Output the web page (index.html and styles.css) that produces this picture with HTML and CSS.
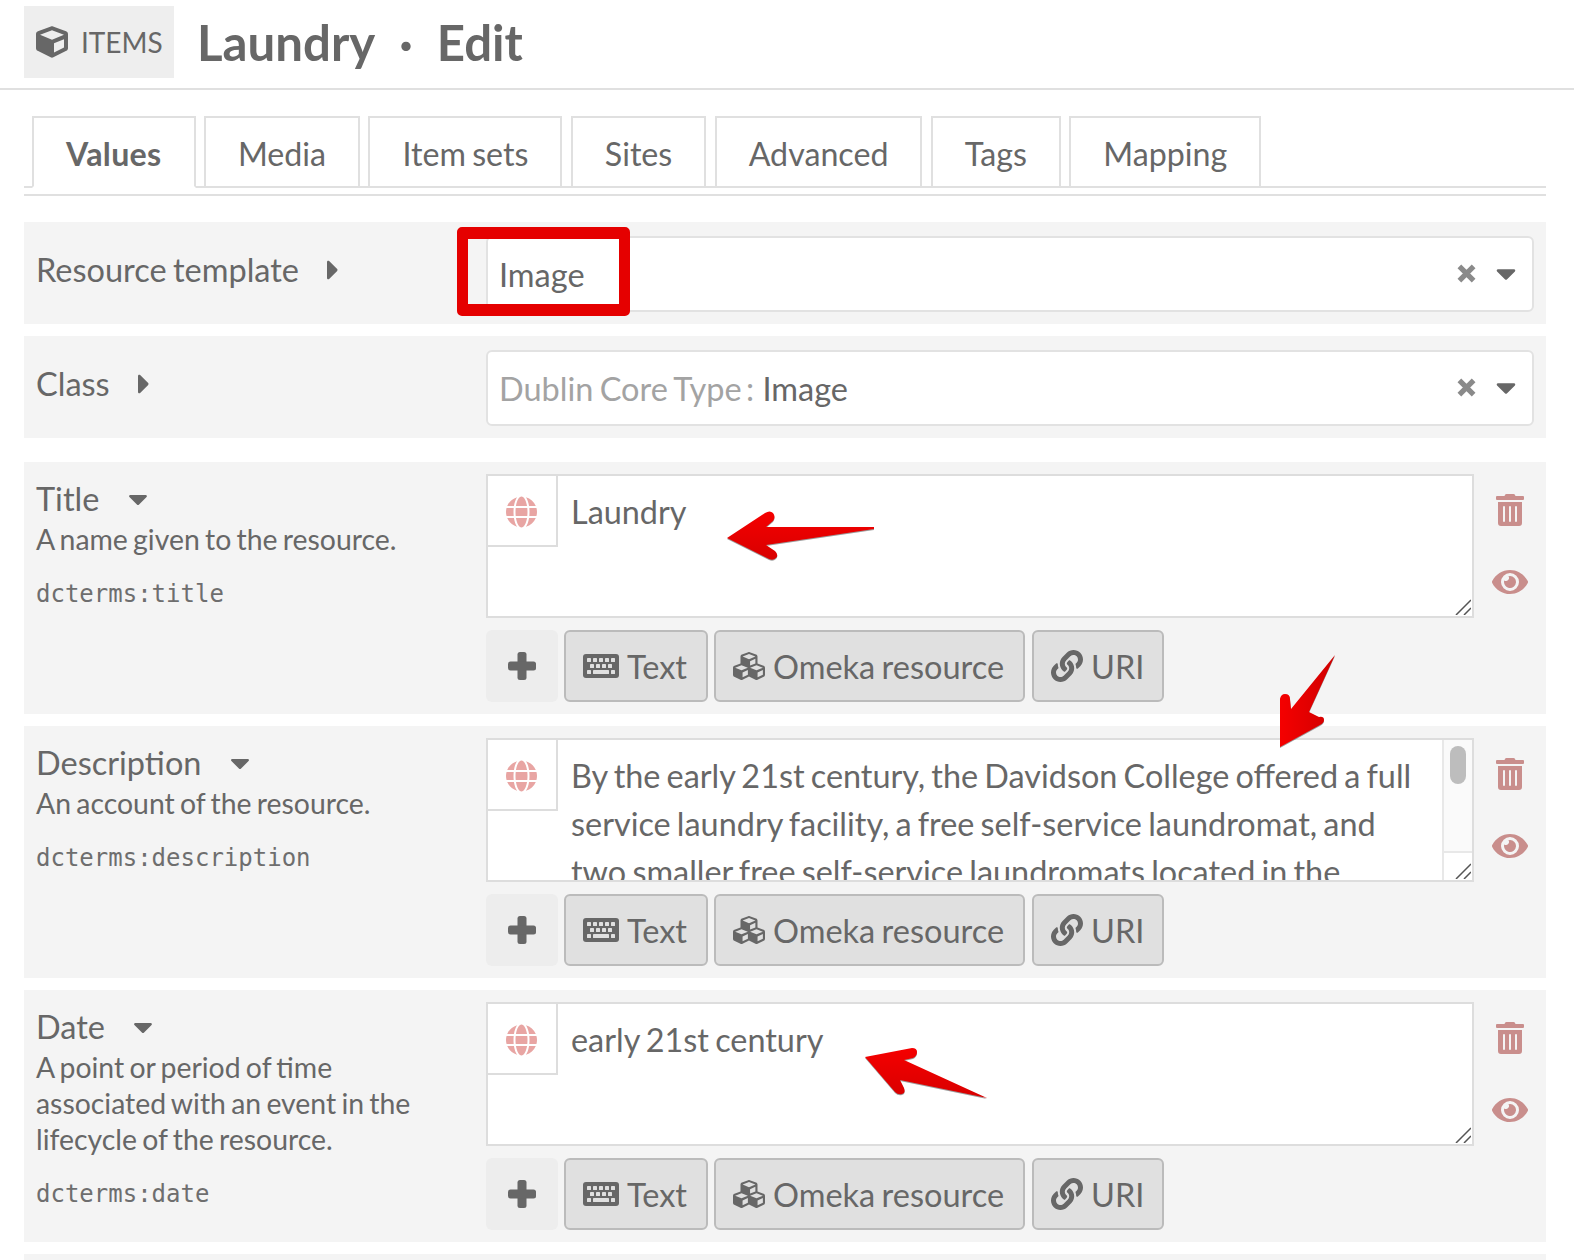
FILE: index.html
```html
<!DOCTYPE html>
<html lang="en">
<head>
<meta charset="UTF-8">
<title>Laundry · Edit</title>
<link rel="stylesheet" href="styles.css">
</head>
<body>

<svg class="icon-defs" xmlns="http://www.w3.org/2000/svg">
  <symbol id="i-cube" viewBox="0 0 512 512"><path d="M239.1 6.3l-208 78c-18.7 7-31.1 25-31.1 45v225.1c0 18.2 10.3 34.8 26.5 42.9l208 104c13.5 6.8 29.4 6.8 42.9 0l208-104c16.3-8.1 26.5-24.8 26.5-42.9V129.3c0-20-12.4-37.9-31.1-44.9l-208-78C262 2.2 250 2.2 239.1 6.3zM256 68.4l192 72v1.1l-192 78-192-78v-1.1l192-72zm32 356V275.5l160-65v133.9l-160 80z"/></symbol>
  <symbol id="i-globe" viewBox="0 0 496 512"><path d="M336.5 160C322 70.7 287.8 8 248 8s-74 62.7-88.5 152h177zM152 256c0 22.2 1.2 43.5 3.3 64h185.3c2.1-20.5 3.3-41.8 3.3-64s-1.2-43.5-3.3-64H155.3c-2.1 20.5-3.3 41.8-3.3 64zm324.7-96c-28.6-67.9-86.5-120.4-158-141.6 24.4 33.8 41.2 84.7 50 141.6h108zM177.2 18.4C105.8 39.6 47.8 92.1 19.3 160h108c8.7-56.9 25.5-107.8 49.9-141.6zM487.4 192H372.7c2.1 21 3.3 42.5 3.3 64s-1.2 43-3.3 64h114.6c5.5-20.5 8.6-41.8 8.6-64s-3.1-43.5-8.5-64zM120 256c0-21.5 1.2-43 3.3-64H8.6C3.2 212.5 0 233.8 0 256s3.2 43.5 8.6 64h114.6c-2-21-3.2-42.5-3.2-64zm39.5 96c14.5 89.3 48.7 152 88.5 152s74-62.7 88.5-152h-177zm159.3 141.6c71.4-21.2 129.4-73.7 158-141.6h-108c-8.8 56.9-25.6 107.8-50 141.6zM19.3 352c28.6 67.9 86.5 120.4 158 141.6-24.4-33.8-41.2-84.7-50-141.6h-108z"/></symbol>
  <symbol id="i-plus" viewBox="0 0 28 28"><rect x="9.5" y="0" width="9" height="28" rx="2.5"/><rect x="0" y="9.5" width="28" height="9" rx="2.5"/></symbol>
  <symbol id="i-keyboard" viewBox="0 0 576 512">
    <rect y="64" width="576" height="384" rx="48"/>
    <g fill="#e0e0e0">
      <rect x="64" y="128" width="64" height="64" rx="10"/><rect x="160" y="128" width="64" height="64" rx="10"/><rect x="256" y="128" width="64" height="64" rx="10"/><rect x="352" y="128" width="64" height="64" rx="10"/><rect x="448" y="128" width="64" height="64" rx="10"/>
      <rect x="112" y="224" width="64" height="64" rx="10"/><rect x="208" y="224" width="64" height="64" rx="10"/><rect x="304" y="224" width="64" height="64" rx="10"/><rect x="400" y="224" width="64" height="64" rx="10"/>
      <rect x="64" y="320" width="64" height="64" rx="10"/><rect x="160" y="320" width="256" height="64" rx="10"/><rect x="448" y="320" width="64" height="64" rx="10"/>
    </g>
  </symbol>
  <symbol id="i-cubes" viewBox="0 0 512 512"><path d="M488.6 250.2L392 214V105.5c0-15-9.3-28.4-23.4-33.7l-100-37.5c-8.1-3.1-17.1-3.1-25.3 0l-100 37.5c-14.1 5.3-23.4 18.7-23.4 33.7V214l-96.6 36.2C9.3 255.5 0 268.9 0 283.9V394c0 13.6 7.7 26.1 19.9 32.2l100 50c10.1 5.1 22.1 5.1 32.2 0l103.9-52 103.9 52c10.1 5.1 22.1 5.1 32.2 0l100-50c12.2-6.1 19.9-18.6 19.9-32.2V283.9c0-15-9.3-28.4-23.4-33.7zM358 214.8l-85 31.9v-68.2l85-37v73.3zM154 104.1l102-38.2 102 38.2v.6l-102 41.4-102-41.4v-.6zm84 291.1l-85 42.5v-79.1l85-38.8v75.4zm0-112l-102 41.4-102-41.4v-.6l102-38.2 102 38.2v.6zm240 112l-85 42.5v-79.1l85-38.8v75.4zm0-112l-102 41.4-102-41.4v-.6l102-38.2 102 38.2v.6z"/></symbol>
  <symbol id="i-link" viewBox="0 0 512 512"><path d="M326.612 185.391c59.747 59.809 58.927 155.698.36 214.59-.11.12-.24.25-.36.37l-67.2 67.2c-59.27 59.27-155.699 59.262-214.96 0-59.27-59.26-59.27-155.7 0-214.96l37.106-37.106c9.84-9.84 26.786-3.3 27.294 10.606.648 17.722 3.826 35.527 9.69 52.721 1.986 5.822.567 12.262-3.783 16.612l-13.087 13.087c-28.026 28.026-28.905 73.66-1.155 101.96 28.024 28.579 74.086 28.749 102.325.51l67.2-67.19c28.191-28.191 28.073-73.757 0-101.83-3.701-3.694-7.429-6.564-10.341-8.569a16.037 16.037 0 0 1-6.947-12.606c-.396-10.567 3.348-21.456 11.698-29.806l21.054-21.055c5.521-5.521 14.182-6.199 20.584-1.731a152.482 152.482 0 0 1 20.522 17.197zM467.547 44.449c-59.261-59.262-155.69-59.27-214.96 0l-67.2 67.2c-.12.12-.25.25-.36.37-58.566 58.892-59.387 154.781.36 214.59a152.454 152.454 0 0 0 20.521 17.196c6.402 4.468 15.064 3.789 20.584-1.731l21.054-21.055c8.35-8.35 12.094-19.239 11.698-29.806a16.037 16.037 0 0 0-6.947-12.606c-2.912-2.005-6.64-4.875-10.341-8.569-28.073-28.073-28.191-73.639 0-101.83l67.2-67.19c28.239-28.239 74.3-28.069 102.325.51 27.75 28.3 26.872 73.934-1.155 101.96l-13.087 13.087c-4.35 4.35-5.769 10.79-3.783 16.612 5.864 17.194 9.042 34.999 9.69 52.721.509 13.906 17.454 20.446 27.294 10.606l37.106-37.106c59.271-59.259 59.271-155.699.001-214.959z"/></symbol>
  <symbol id="i-trash" viewBox="0 0 448 512"><path d="M32 464a48 48 0 0 0 48 48h288a48 48 0 0 0 48-48V128H32zm272-256a16 16 0 0 1 32 0v224a16 16 0 0 1-32 0zm-96 0a16 16 0 0 1 32 0v224a16 16 0 0 1-32 0zm-96 0a16 16 0 0 1 32 0v224a16 16 0 0 1-32 0zM432 32H312l-9.4-18.7A24 24 0 0 0 281.1 0H166.8a23.72 23.72 0 0 0-21.4 13.3L136 32H16A16 16 0 0 0 0 48v32a16 16 0 0 0 16 16h416a16 16 0 0 0 16-16V48a16 16 0 0 0-16-16z"/></symbol>
  <symbol id="i-eye" viewBox="0 0 576 512"><path d="M572.52 241.4C518.29 135.59 410.93 64 288 64S57.68 135.64 3.48 241.41a32.35 32.35 0 0 0 0 29.19C57.71 376.41 165.07 448 288 448s230.32-71.64 284.52-177.41a32.35 32.35 0 0 0 0-29.19zM288 400a144 144 0 1 1 144-144 143.93 143.93 0 0 1-144 144zm0-240a95.31 95.31 0 0 0-25.31 3.79 47.85 47.85 0 0 1-66.9 66.9A95.78 95.78 0 1 0 288 160z"/></symbol>
  <symbol id="i-caret-down" viewBox="0 0 320 200"><path d="M31.3 0h257.3c17.8 0 26.7 21.5 14.1 34.1L174.1 162.8c-7.8 7.8-20.5 7.8-28.3 0L17.2 34.1C4.6 21.5 13.5 0 31.3 0z"/></symbol>
  <symbol id="i-caret-right" viewBox="0 0 192 320"><path d="M0 288.662V31.338c0-17.818 21.543-26.741 34.142-14.142l128.662 128.662c7.81 7.81 7.81 20.474 0 28.284L34.142 302.804C21.543 315.404 0 306.48 0 288.662z"/></symbol>
  <symbol id="i-close" viewBox="0 0 20 20"><path d="M2.5 2.5l15 15M17.5 2.5l-15 15" fill="none" stroke="currentColor" stroke-width="5.5"/></symbol>
  <symbol id="i-grip" viewBox="0 0 16 16"><path d="M1 16L16 1M9 16l7-7" fill="none" stroke="#555" stroke-width="1.5"/></symbol>
</svg>

<div class="page">

  <header class="page-head">
    <div class="crumb">
      <svg class="crumb-icon"><use href="#i-cube"/></svg>
      <span>ITEMS</span>
    </div>
    <h1>Laundry<span class="dot">·</span>Edit</h1>
  </header>

  <!-- Tabs -->
  <nav class="tabs">
    <a class="tab active">Values</a>
    <a class="tab">Media</a>
    <a class="tab">Item sets</a>
    <a class="tab">Sites</a>
    <a class="tab">Advanced</a>
    <a class="tab">Tags</a>
    <a class="tab">Mapping</a>
  </nav>
  <div class="tabs-rule"></div>

  <!-- Template and class -->
  <section class="row row-select">
    <div class="label-col">
      <div class="label">Resource template <svg class="caret-right"><use href="#i-caret-right"/></svg></div>
    </div>
    <div class="select">
      <span class="select-value">Image</span>
      <svg class="select-x"><use href="#i-close"/></svg>
      <svg class="select-caret"><use href="#i-caret-down"/></svg>
    </div>
  </section>

  <section class="row row-select row-class">
    <div class="label-col">
      <div class="label">Class <svg class="caret-right"><use href="#i-caret-right"/></svg></div>
    </div>
    <div class="select">
      <span class="select-value"><span class="muted">Dublin Core Type <span class="colon">:</span></span> Image</span>
      <svg class="select-x"><use href="#i-close"/></svg>
      <svg class="select-caret"><use href="#i-caret-down"/></svg>
    </div>
  </section>

  <!-- Title -->
  <section class="row row-value">
    <div class="label-col">
      <div class="label">Title <svg class="caret-down"><use href="#i-caret-down"/></svg></div>
      <p class="desc">A name given to the resource.</p>
      <p class="term">dcterms:title</p>
    </div>
    <div class="value-col">
      <div class="field">
        <div class="lang"><svg class="globe"><use href="#i-globe"/></svg></div>
        <div class="field-text">Laundry</div>
        <svg class="grip"><use href="#i-grip"/></svg>
      </div>
      <div class="actions">
        <button class="btn-add"><svg><use href="#i-plus"/></svg></button>
        <button class="btn btn-text"><svg class="ico-keyboard"><use href="#i-keyboard"/></svg>Text</button>
        <button class="btn btn-omeka"><svg><use href="#i-cubes"/></svg>Omeka resource</button>
        <button class="btn btn-uri"><svg><use href="#i-link"/></svg>URI</button>
      </div>
    </div>
    <div class="tools">
      <svg class="trash"><use href="#i-trash"/></svg>
      <svg class="eye"><use href="#i-eye"/></svg>
    </div>
  </section>

  <!-- Description -->
  <section class="row row-value">
    <div class="label-col">
      <div class="label">Description <svg class="caret-down"><use href="#i-caret-down"/></svg></div>
      <p class="desc">An account of the resource.</p>
      <p class="term">dcterms:description</p>
    </div>
    <div class="value-col">
      <div class="field">
        <div class="lang"><svg class="globe"><use href="#i-globe"/></svg></div>
        <div class="field-text">By the early 21st century, the Davidson College offered a full service laundry facility, a free self-service laundromat, and two smaller free self-service laundromats located in the</div>
        <div class="scrollbar">
          <div class="scroll-thumb"></div>
          <div class="scroll-corner"></div>
        </div>
        <svg class="grip"><use href="#i-grip"/></svg>
      </div>
      <div class="actions">
        <button class="btn-add"><svg><use href="#i-plus"/></svg></button>
        <button class="btn btn-text"><svg class="ico-keyboard"><use href="#i-keyboard"/></svg>Text</button>
        <button class="btn btn-omeka"><svg><use href="#i-cubes"/></svg>Omeka resource</button>
        <button class="btn btn-uri"><svg><use href="#i-link"/></svg>URI</button>
      </div>
    </div>
    <div class="tools">
      <svg class="trash"><use href="#i-trash"/></svg>
      <svg class="eye"><use href="#i-eye"/></svg>
    </div>
  </section>

  <!-- Date -->
  <section class="row row-value">
    <div class="label-col">
      <div class="label">Date <svg class="caret-down"><use href="#i-caret-down"/></svg></div>
      <p class="desc">A point or period of time associated with an event in the lifecycle of the resource.</p>
      <p class="term">dcterms:date</p>
    </div>
    <div class="value-col">
      <div class="field">
        <div class="lang"><svg class="globe"><use href="#i-globe"/></svg></div>
        <div class="field-text">early 21st century</div>
        <svg class="grip"><use href="#i-grip"/></svg>
      </div>
      <div class="actions">
        <button class="btn-add"><svg><use href="#i-plus"/></svg></button>
        <button class="btn btn-text"><svg class="ico-keyboard"><use href="#i-keyboard"/></svg>Text</button>
        <button class="btn btn-omeka"><svg><use href="#i-cubes"/></svg>Omeka resource</button>
        <button class="btn btn-uri"><svg><use href="#i-link"/></svg>URI</button>
      </div>
    </div>
    <div class="tools">
      <svg class="trash"><use href="#i-trash"/></svg>
      <svg class="eye"><use href="#i-eye"/></svg>
    </div>
  </section>

  <section class="row row-next"></section>

  <!-- Red annotations drawn over the screenshot -->
  <div class="callout"></div>
  <svg class="arrows" viewBox="0 0 1574 1260" xmlns="http://www.w3.org/2000/svg">
    <defs>
      <linearGradient id="red-h" x1="0" y1="0" x2="0" y2="1">
        <stop offset="0" stop-color="#f50000"/>
        <stop offset="1" stop-color="#d80000"/>
      </linearGradient>
      <linearGradient id="red-d" x1="0" y1="0" x2="1" y2="0">
        <stop offset="0" stop-color="#f50000"/>
        <stop offset="1" stop-color="#d00000"/>
      </linearGradient>
    </defs>
    <path fill="url(#red-h)" d="M727 538L765 513Q770 510 773 513Q776 517 773 521L766 527L874 527L874 529L766 545L775 551Q779 555 776 558Q773 561 769 559Z"/>
    <path fill="url(#red-d)" d="M1280 747L1280 699Q1281 694 1285 694Q1290 694 1290 699L1291 709L1335 655L1309 712L1319 717Q1324 716 1324 720Q1324 723 1320 725Z"/>
    <path fill="url(#red-h)" d="M865 1057L912 1048Q917 1048 917 1052Q917 1056 913 1058L904 1060L987 1098L900 1080L904 1088Q906 1093 902 1094Q898 1095 895 1092Z"/>
  </svg>

</div>

</body>
</html>
```

FILE: styles.css
```css
* {
  box-sizing: border-box;
}
html, body {
  margin: 0;
  height: 1260px;
  overflow: hidden;
  background-color: #fff;
}
body {
  font-family: Lato, "Open Sans", sans-serif;
  font-size: 32.5px;
  word-spacing: -2px;
  color: #676767;
}
svg {
  fill: currentColor;
}
.icon-defs {
  display: none;
}
.page {
  position: relative;
  width: 1574px;
  height: 1260px;
}

/* Header */
.page-head {
  display: flex;
  align-items: center;
  height: 90px;
  padding: 6px 0 10px 24px;
  border-bottom: 2px solid #e0e0e0;
}
.crumb {
  display: flex;
  align-items: center;
  gap: 13px;
  width: 150px;
  height: 72px;
  padding-left: 12px;
  background-color: #eee;
  font-size: 28px;
}
.crumb-icon {
  width: 32px;
  height: 32px;
}
h1 {
  margin: 0 0 0 23px;
  font-size: 49.2px;
  font-weight: 700;
  line-height: 72px;
}
.dot {
  margin: 0 24px;
}

/* Tabs */
.tabs {
  display: flex;
  gap: 8.4px;
  margin: 26px 28px 0 24px;
  padding-left: 8px;
  height: 72px;
  border-bottom: 2px solid #e0e0e0;
  font-size: 32.2px;
}
.tab {
  height: 72px;
  padding: 0 32px;
  border: 2px solid #e0e0e0;
  line-height: 72px;
  background-color: #fff;
}
.tab.active {
  font-weight: 700;
  letter-spacing: 0.3px;
  border-bottom-color: #fff;
}
.tabs-rule {
  height: 2px;
  margin: 6px 28px 26px 24px;
  background-color: #e0e0e0;
}

/* Rows */
.row {
  display: flex;
  margin: 0 28px 12px 24px;
  background-color: #f4f4f4;
}
.label-col {
  flex: none;
  width: 462px;
  padding: 12px 40px 0 12px;
}
.label {
  line-height: 50px;
}
.caret-right {
  width: 12px;
  height: 20px;
  margin-left: 22px;
  vertical-align: 2px;
}
.caret-down {
  width: 20px;
  height: 12px;
  margin-left: 22px;
  vertical-align: 4px;
}
.desc {
  margin: -3px 0 0;
  font-size: 28.4px;
  line-height: 36px;
}
.term {
  margin: 22px 0 0;
  font-family: "DejaVu Sans Mono", monospace;
  font-size: 24px;
  line-height: 30px;
  color: #6e6e6e;
}

/* Template / class selects */
.row-select {
  height: 102px;
  padding-top: 14px;
}
.row-select .label-col {
  padding-top: 9px;
}
.row-class {
  margin-bottom: 24px;
}
.select {
  display: flex;
  align-items: center;
  width: 1048px;
  height: 76px;
  padding: 0 16px 0 11px;
  border: 2px solid #e2e2e2;
  border-radius: 6px;
  background-color: #fff;
}
.select-value {
  flex: 1;
}
.muted {
  color: #a3a3a3;
}
.colon {
  margin: 0 2px 0 -2px;
}
.select-x {
  width: 19px;
  height: 19px;
  margin: -2px 20px 0 0;
  color: #8a8a8a;
}
.select-caret {
  width: 20px;
  height: 13px;
  margin-top: 2px;
}

/* Value rows */
.row-value {
  height: 252px;
}
.value-col {
  flex: none;
  width: 988px;
  padding-top: 12px;
}
.field {
  position: relative;
  display: flex;
  height: 144px;
  border: 2px solid #ddd;
  background-color: #fff;
  overflow: hidden;
}
.lang {
  flex: none;
  display: flex;
  align-items: center;
  justify-content: center;
  width: 70px;
  height: 71px;
  padding: 2px 2px 0 0;
  border-right: 2px solid #ddd;
  border-bottom: 2px solid #ddd;
  color: #e8a5a3;
}
.globe {
  width: 31px;
  height: 32px;
}
.field-text {
  flex: 1;
  padding: 12px 14px 0 13px;
  font-size: 32.4px;
  word-spacing: -2.1px;
  line-height: 48px;
}
.grip {
  position: absolute;
  right: 1px;
  bottom: 1px;
  width: 16px;
  height: 16px;
}
.scrollbar {
  flex: none;
  width: 30px;
  position: relative;
  background-color: #fafafa;
  border-left: 2px solid #e8e8e8;
}
.scroll-thumb {
  width: 16px;
  height: 38px;
  margin: 6px 0 0 6px;
  border-radius: 8px;
  background-color: #bdbdbd;
}
.scroll-corner {
  position: absolute;
  left: 0;
  right: 0;
  bottom: 0;
  height: 29px;
  border-top: 2px solid #e8e8e8;
  background-color: #fff;
}

/* Add value buttons */
.actions {
  display: flex;
  gap: 6px;
  margin-top: 12px;
}
.actions button {
  display: flex;
  align-items: center;
  height: 72px;
  font-family: inherit;
  font-size: 32.5px;
  word-spacing: -2px;
  color: #676767;
}
.btn-add {
  justify-content: center;
  width: 72px;
  padding: 0;
  border: none;
  border-radius: 6px;
  background-color: #ededed;
}
.btn-add svg {
  width: 28px;
  height: 28px;
}
.btn {
  gap: 8px;
  padding: 0 0 0 17px;
  border: 2px solid #bbb;
  border-radius: 6px;
  background-color: #e0e0e0;
}
.btn svg {
  width: 32px;
  height: 32px;
}
.btn svg.ico-keyboard {
  width: 36px;
}
.btn-text {
  width: 144px;
}
.btn-omeka {
  width: 311px;
  margin-right: 1px;
}
.btn-uri {
  width: 132px;
}

/* Delete / hide */
.tools {
  flex: 1;
  display: flex;
  flex-direction: column;
  align-items: center;
  padding: 32px 0 0 0;
  color: #c98e8c;
}
.trash {
  width: 28px;
  height: 32px;
}
.eye {
  width: 36px;
  height: 32px;
  margin-top: 40px;
}
.row-next {
  height: 40px;
}

/* Annotations */
.callout {
  position: absolute;
  left: 457px;
  top: 227px;
  width: 173px;
  height: 89px;
  border: solid #e50000;
  border-width: 12px 11px;
  border-radius: 5px;
}
.arrows {
  position: absolute;
  left: 0;
  top: 0;
  width: 1574px;
  height: 1260px;
  pointer-events: none;
  filter: drop-shadow(0 1px 0 rgba(90, 90, 90, 0.6));
}
```
